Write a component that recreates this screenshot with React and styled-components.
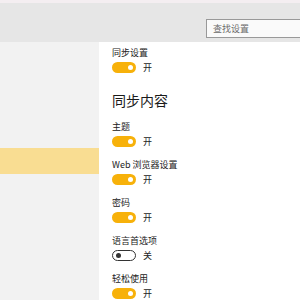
import styled, { createGlobalStyle } from 'styled-components';

const GlobalStyle = createGlobalStyle`
  html, body {
    margin: 0;
    padding: 0;
    background: #ffffff;
  }
  body {
    font-family: "Noto Sans CJK SC", "Liberation Sans", sans-serif;
  }
`;

const settings = [
  { label: '主题', on: true },
  { label: 'Web 浏览器设置', on: true },
  { label: '密码', on: true },
  { label: '语言首选项', on: false },
  { label: '轻松使用', on: true },
];

function Setting({ label, on }) {
  return (
    <Block>
      <Label>{label}</Label>
      <ToggleRow>
        <Toggle $on={on}>
          <Knob $on={on} />
        </Toggle>
        <State>{on ? '开' : '关'}</State>
      </ToggleRow>
    </Block>
  );
}

function App() {
  return (
    <Frame>
      <GlobalStyle />
      <TopStrip />
      <Header>
        <Search>查找设置</Search>
      </Header>
      <Main>
        <Nav>
          <NavItem $active />
        </Nav>
        <Content>
          <Setting label="同步设置" on />
          <Heading>同步内容</Heading>
          {settings.map((s) => (
            <Setting key={s.label} label={s.label} on={s.on} />
          ))}
        </Content>
      </Main>
    </Frame>
  );
}

const Frame = styled.div`
  width: 300px;
  height: 300px;
  overflow: hidden;
  display: flex;
  flex-direction: column;
`;

const TopStrip = styled.div`
  height: 3px;
  background: #f4eef1;
  flex: none;
`;

const Header = styled.div`
  height: 39px;
  flex: none;
  background: #e6e6e6;
  display: flex;
  padding: 16px 0 0 206px;
  box-sizing: border-box;
`;

const Search = styled.div`
  width: 110px;
  height: 19px;
  flex: none;
  box-sizing: border-box;
  border: 1px solid #999999;
  background: #fafafa;
  color: #6b6b6b;
  font-size: 9px;
  line-height: 17px;
  padding-left: 6px;
`;

const Main = styled.div`
  flex: 1;
  display: flex;
`;

const Nav = styled.div`
  width: 99px;
  flex: none;
  background: #f2f2f2;
  padding-top: 106px;
`;

const NavItem = styled.div`
  height: 26px;
  background: ${(p) => (p.$active ? '#f9dd92' : 'transparent')};
`;

const Content = styled.div`
  flex: 1;
  padding: 4px 0 0 13px;
  color: #1a1a1a;
`;

const Block = styled.div`
  margin-bottom: 11px;
`;

const Label = styled.div`
  font-size: 9px;
  line-height: 14px;
  height: 14px;
  margin-bottom: 2px;
  color: #222222;
`;

const ToggleRow = styled.div`
  display: flex;
  align-items: center;
  gap: 7px;
  height: 11px;
`;

const Toggle = styled.div`
  width: 24px;
  height: 11px;
  box-sizing: border-box;
  border-radius: 6px;
  background: ${(p) => (p.$on ? '#f7b10a' : '#ffffff')};
  border: ${(p) => (p.$on ? 'none' : '1.5px solid #333333')};
  display: flex;
  align-items: center;
  justify-content: ${(p) => (p.$on ? 'flex-end' : 'flex-start')};
  padding: 0 3px;
`;

const Knob = styled.div`
  width: 5px;
  height: 5px;
  border-radius: 50%;
  background: ${(p) => (p.$on ? '#ffffff' : '#333333')};
`;

const State = styled.span`
  font-size: 9px;
  line-height: 11px;
  color: #222222;
`;

const Heading = styled.div`
  font-size: 14px;
  line-height: 20px;
  margin: 17px 0 10px;
  color: #1a1a1a;
`;

export default App;
